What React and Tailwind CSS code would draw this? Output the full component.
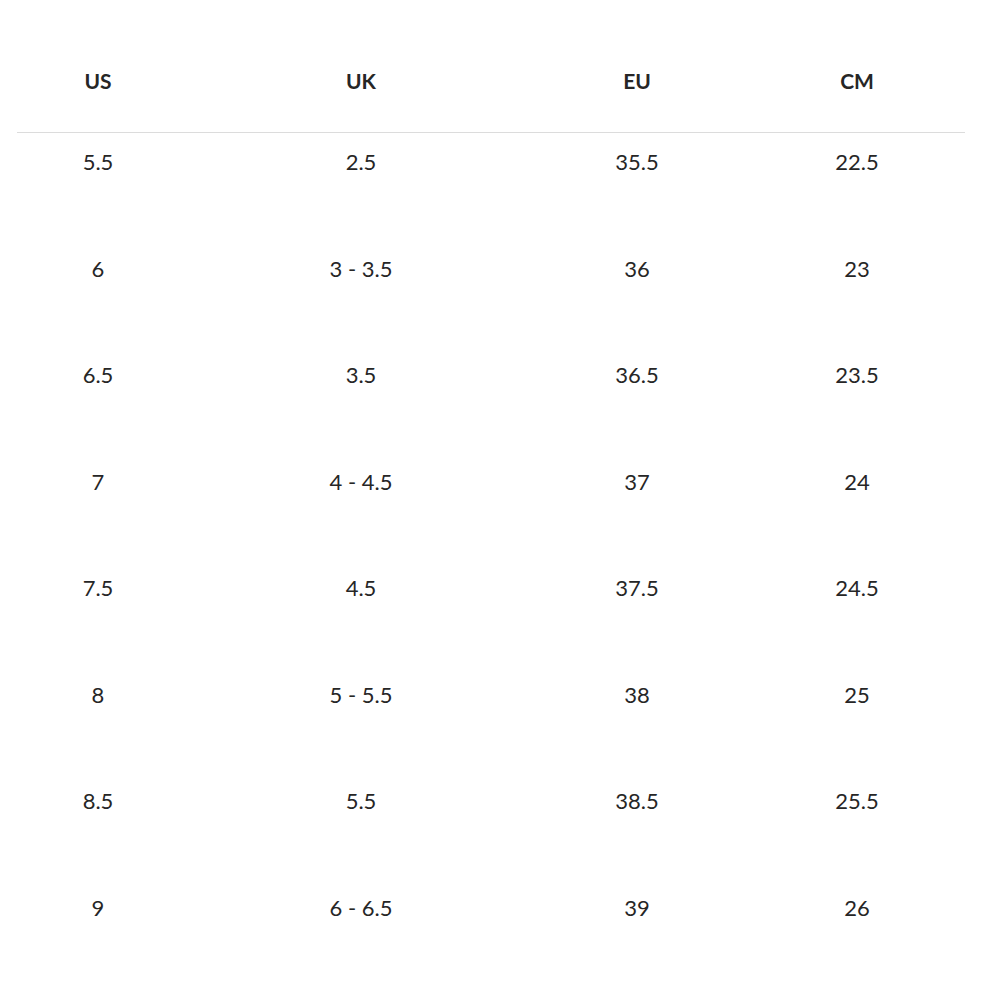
import React from 'react';

const rows = [
    ['5.5', '2.5', '35.5', '22.5'],
    ['6', '3 - 3.5', '36', '23'],
    ['6.5', '3.5', '36.5', '23.5'],
    ['7', '4 - 4.5', '37', '24'],
    ['7.5', '4.5', '37.5', '24.5'],
    ['8', '5 - 5.5', '38', '25'],
    ['8.5', '5.5', '38.5', '25.5'],
    ['9', '6 - 6.5', '39', '26'],
];

const cols = 'grid grid-cols-[162px_364px_188px_252px]';

const App = () => {
    return (
        <div className="min-h-[1000px] bg-white pl-[17px] text-[#262626]" style={{ fontFamily: 'Lato, "Noto Sans", sans-serif' }}>
            <div className={`${cols} h-[132px] pt-[67px] text-center text-[21px] font-bold leading-[28px]`}>
                <div>US</div>
                <div>UK</div>
                <div>EU</div>
                <div>CM</div>
            </div>
            <div className="h-px w-[948px] bg-[#dcdcdc]" />
            {rows.map((row, i) => (
                <div key={i} className={`${cols} h-[106.57px] pt-[15px] text-center text-[22px] leading-[28px]`}>
                    {row.map((cell, j) => (
                        <div key={j}>{cell}</div>
                    ))}
                </div>
            ))}
        </div>
    );
};

export default App;
